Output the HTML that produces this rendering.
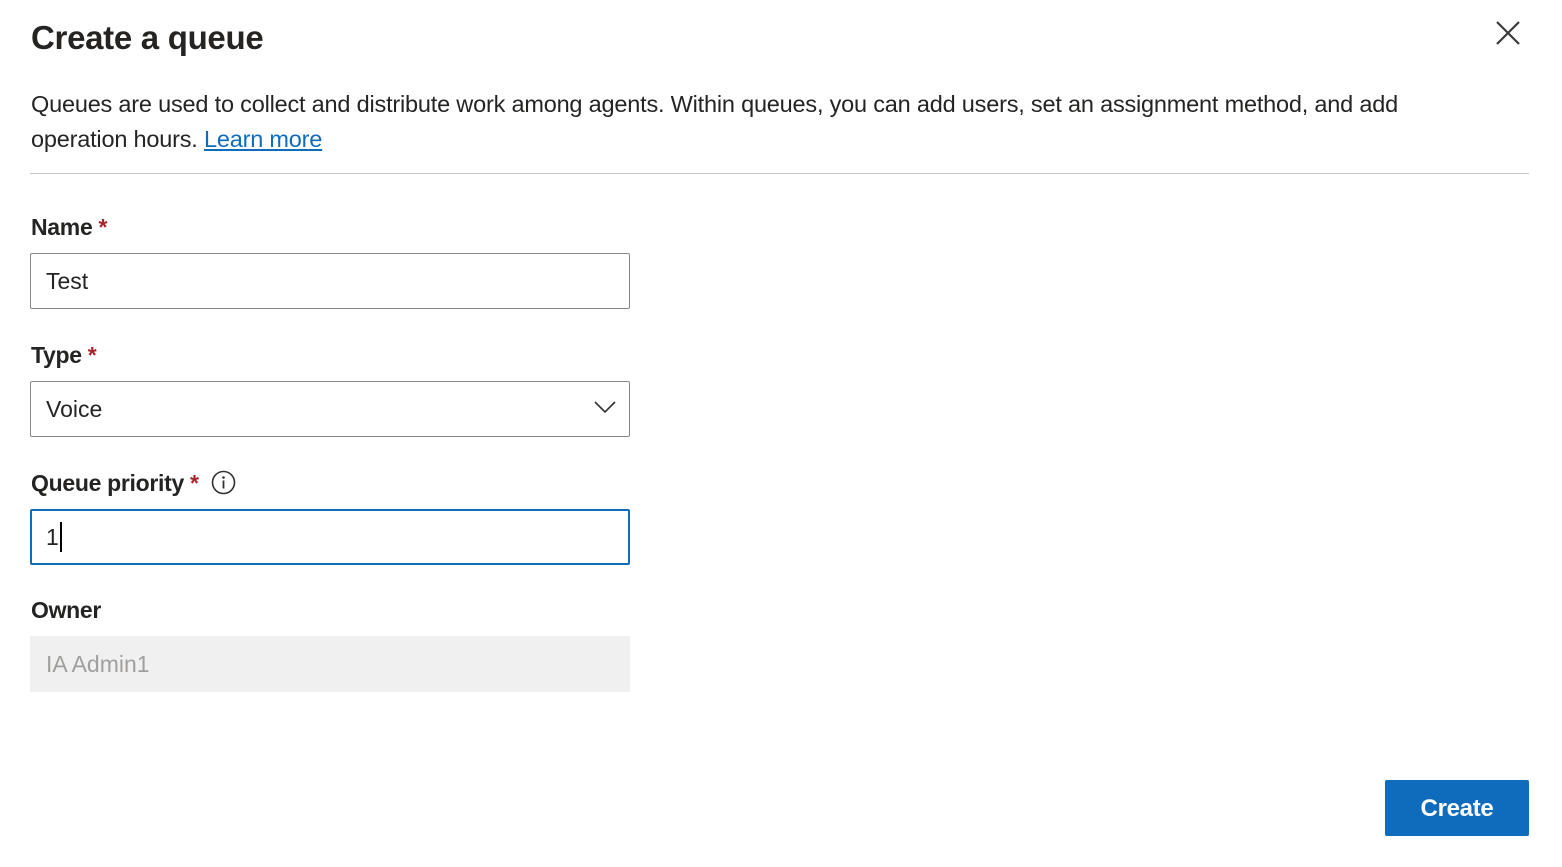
<!DOCTYPE html>
<html><head><style>
body{margin:0;width:1562px;height:867px;background:#fff;font-family:"Liberation Sans",sans-serif;color:#252423;position:relative;overflow:hidden}
.a{position:absolute}
h1{position:absolute;left:31px;top:19px;margin:0;font-size:33px;font-weight:bold;letter-spacing:-0.3px}
.desc{left:31px;top:87px;width:1420px;font-size:23.5px;line-height:35px;letter-spacing:-0.2px}
.desc a{color:#0f6cbd;text-decoration:underline}
.lbl{left:31px;font-size:23px;font-weight:bold;letter-spacing:-0.3px}
.req{color:#a4262c;margin-left:6px}
.box{left:30px;width:598px;height:54px;border:1px solid #8a8886;border-radius:2px;font-size:23px;line-height:54px;box-sizing:content-box}
.box span{margin-left:15px}
</style></head><body>
<h1>Create a queue</h1>
<svg class="a" style="left:1494px;top:19px" width="28" height="28" viewBox="0 0 28 28"><path d="M3 3L25 25M25 3L3 25" stroke="#3b3a39" stroke-width="2.2"/></svg>
<div class="a desc">Queues are used to collect and distribute work among agents. Within queues, you can add users, set an assignment method, and add operation hours. <a>Learn more</a></div>
<div class="a" style="left:30px;top:173px;width:1499px;height:1px;background:#c8c6c4"></div>
<div class="a lbl" style="top:214px">Name<span class="req">*</span></div>
<div class="a box" style="top:253px"><span>Test</span></div>
<div class="a lbl" style="top:342px">Type<span class="req">*</span></div>
<div class="a box" style="top:381px"><span>Voice</span>
<svg class="a" style="left:563px;top:18px" width="22" height="14" viewBox="0 0 22 14"><path d="M1 2L11 12L21 2" fill="none" stroke="#323130" stroke-width="1.6"/></svg></div>
<div class="a lbl" style="top:470px">Queue priority<span class="req">*</span>
<svg style="vertical-align:-4px;margin-left:6px" width="25" height="25" viewBox="0 0 25 25"><circle cx="12.5" cy="12.5" r="11" fill="none" stroke="#323130" stroke-width="1.6"/><circle cx="12.5" cy="7.5" r="1.3" fill="#323130"/><path d="M12.5 10.5V18.5" stroke="#323130" stroke-width="1.8"/></svg></div>
<div class="a box" style="top:509px;width:596px;height:52px;border:2px solid #0f6cbd;line-height:52px"><span style="margin-left:14px">1</span><span style="display:inline-block;width:2px;height:30px;background:#000;margin-left:1px;vertical-align:-7px"></span></div>
<div class="a lbl" style="top:597px">Owner</div>
<div class="a box" style="top:636px;border-color:#f0f0f0;background:#f0f0f0;color:#a19f9d"><span>IA Admin1</span></div>
<div class="a" style="left:1385px;top:780px;width:144px;height:56px;background:#0f6cbd;border-radius:2px;color:#fff;font-size:24px;font-weight:bold;text-align:center;line-height:58px;letter-spacing:-0.3px">Create</div>
</body></html>
